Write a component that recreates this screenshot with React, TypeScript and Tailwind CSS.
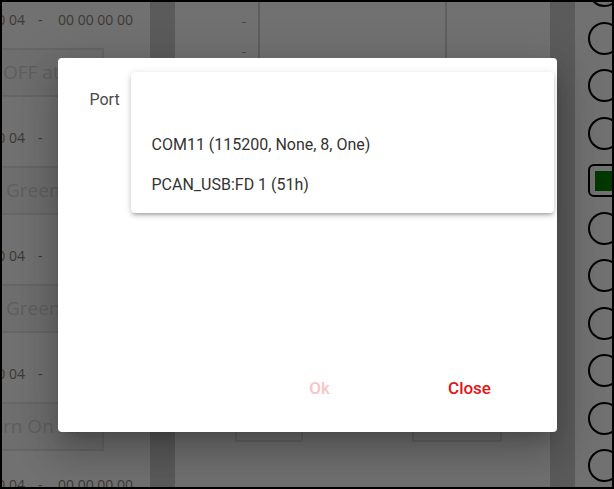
import React, { FC } from 'react';

// dimmed background app (behind the dialog)
const rowLabels = [
  { text: 'OFF at 00', pad: 1 },
  { text: 'Green Off', pad: 4 },
  { text: 'Green Off', pad: 4 },
  { text: 'rn On All', pad: 1 },
];

const HexLine: FC = () => (
  <div className="h-[34px] flex items-center whitespace-nowrap text-[14px] text-[#3d3934]">
    <div className="w-[23px] shrink-0 flex justify-end">
      <span className="shrink-0">00 00 04</span>
    </div>
    <span className="ml-[13px] w-[20px] shrink-0">-</span>
    <span className="shrink-0">00 00 00 00</span>
  </div>
);

const LeftRow: FC<{ text: string; pad: number }> = ({ text, pad }) => (
  <div className="flex flex-col shrink-0">
    <HexLine />
    <div
      className="mt-[12px] h-[49px] w-[180px] ml-[-78px] border-2 border-[#666666] bg-[#6e6e6e] flex items-center whitespace-nowrap text-[19px] text-[#5f5f5f]"
      style={{ paddingLeft: 76 + pad }}
    >
      {text}
    </div>
    <div className="h-[23px]" />
  </div>
);

const Circle: FC = () => (
  <div className="h-[47.5px] flex items-center shrink-0">
    <div className="ml-[13px] w-[33px] h-[33px] rounded-full border-2 border-black shrink-0" />
  </div>
);

const GreenLed: FC = () => (
  <div className="h-[47.5px] flex items-center shrink-0">
    <div className="ml-[13px] w-[40px] h-[33px] rounded-[6px] border-2 border-black shrink-0 flex items-center pl-[5px]">
      <div className="w-[30px] h-[20px] bg-[#003800]" />
    </div>
  </div>
);

const Background: FC = () => (
  <div className="flex h-full bg-[#717171] overflow-hidden" style={{ fontFamily: '"Open Sans", "DejaVu Sans", sans-serif' }}>
    <div className="w-[148px] shrink-0 flex flex-col overflow-hidden">
      {rowLabels.map((l, i) => (
        <LeftRow key={i} text={l.text} pad={l.pad} />
      ))}
      <HexLine />
    </div>
    <div className="w-[25px] shrink-0 bg-[#5b5b5b]" />
    <div className="w-[83px] shrink-0 flex flex-col">
      <div className="h-[100px] flex flex-col items-end pr-[12px]">
        <div className="mt-[20px] w-[4px] h-[1px] bg-[#4a4a4a]" />
        <div className="mt-[29px] w-[4px] h-[1px] bg-[#4a4a4a]" />
      </div>
      <div className="mt-[250px] ml-[60px] w-[68px] h-[90px] border-2 border-[#666666]" />
    </div>
    <div className="w-[2px] h-[100px] shrink-0 bg-[#5e5e5e]" />
    <div className="w-[185px] shrink-0 flex flex-col">
      <div className="mt-[350px] ml-[152px] w-[90px] h-[90px] border-2 border-[#666666]" />
    </div>
    <div className="w-[2px] h-[100px] shrink-0 bg-[#5e5e5e]" />
    <div className="w-[103px] shrink-0" />
    <div className="w-[25px] shrink-0 bg-[#5b5b5b]" />
    <div className="flex-1 flex flex-col overflow-hidden mt-[-35px]">
      <Circle />
      <Circle />
      <Circle />
      <Circle />
      <GreenLed />
      <Circle />
      <Circle />
      <Circle />
      <Circle />
      <Circle />
      <Circle />
    </div>
  </div>
);

const PortDialog: FC = () => (
  <div
    className="relative w-[499px] h-[374px] bg-white rounded-[4px] flex flex-col shadow-[0px_11px_15px_-7px_rgba(0,0,0,0.2),0px_24px_38px_3px_rgba(0,0,0,0.14),0px_9px_46px_8px_rgba(0,0,0,0.12)]"
    style={{ fontFamily: 'Roboto, "Liberation Sans", sans-serif' }}
  >
    <div className="pl-[32px] pt-[32px] text-[16px] text-[#4a4a4a] leading-[20px]">Port</div>
    <div className="flex-1" />
    <div className="flex justify-end gap-[50px] pr-[37px] pb-[25px]">
      <button disabled className="w-[100px] h-[36px] text-[17px] font-medium text-[#f9c4c4]">Ok</button>
      <button className="w-[100px] h-[36px] text-[17px] font-medium text-[#e41414]">Close</button>
    </div>

    {/* open select menu */}
    <div className="absolute left-[73px] top-[14px] w-[423px] h-[141px] bg-white rounded-[4px] pt-[8px] text-[16px] text-[#333333] shadow-[0px_3px_3px_-2px_rgba(0,0,0,0.2),0px_3px_4px_0px_rgba(0,0,0,0.14),0px_1px_8px_0px_rgba(0,0,0,0.12)]">
      <div className="h-[45px]" />
      <div className="h-[40px] flex items-center pl-[21px]">COM11 (115200, None, 8, One)</div>
      <div className="h-[40px] flex items-center pl-[21px]">PCAN_USB:FD 1 (51h)</div>
    </div>
  </div>
);

const App: FC = () => (
  <div className="relative w-[614px] h-[489px] overflow-hidden bg-black p-[2px]">
    <Background />
    <div className="absolute inset-0 flex items-center justify-center">
      <PortDialog />
    </div>
  </div>
);

export default App;
